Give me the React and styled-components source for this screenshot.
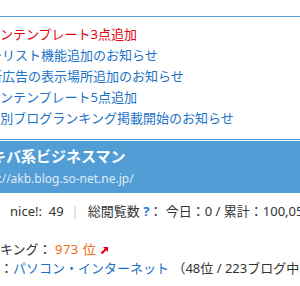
import styled, { createGlobalStyle } from 'styled-components'

const GlobalStyle = createGlobalStyle`
    html, body {
        margin: 0;
        padding: 0;
        background: #ffffff;
        overflow: hidden;
    }
    body {
        font-family: "Noto Sans", "Noto Sans CJK JP", sans-serif;
        color: #333333;
    }
`;

const Page = styled.div`
    width: 300px;
    height: 286px;
    overflow: hidden;
    padding-top: 16px;
    box-sizing: border-box;
`;

const Rule = styled.div`
    height: 1px;
    background: #5b9ed8;
    margin-top: ${p => p.gap || 0}px;
`;

const NewsList = styled.ul`
    list-style: none;
    margin: 0;
    padding: 7px 0 10px;
`;

const NewsItem = styled.li`
    font-size: 13px;
    line-height: 21px;
    white-space: nowrap;
    text-indent: ${p => p.shift}px;
    a {
        color: ${p => (p.hot ? '#e8000b' : '#1b73c8')};
        text-decoration: none;
    }
`;

const BlogHeader = styled.div`
    border-top: 1px solid #519bd6;
    padding-top: 1px;
`;

const HeaderBox = styled.div`
    background: #529dd6;
    padding: 5px 0 6px;
    white-space: nowrap;
`;

const BlogTitle = styled.h1`
    margin: 0;
    font-size: 15px;
    line-height: 20px;
    font-weight: bold;
    color: #ffffff;
    text-indent: -24px;
`;

const BlogUrl = styled.div`
    margin-top: 5px;
    font-size: 12px;
    line-height: 16px;
    color: #dfeaf6;
    text-indent: -25px;
`;

const InfoLine = styled.div`
    font-size: 13px;
    line-height: ${p => p.lh || 19}px;
    margin-top: ${p => p.gap || 0}px;
    padding-left: ${p => p.pad || 0}px;
    text-indent: ${p => p.shift || 0}px;
    white-space: nowrap;
    color: #333333;
`;

const Sep = styled.span`
    color: #cccccc;
    margin: 0 9px 0 8px;
`;

const Help = styled.span`
    color: #2a7bd0;
    font-weight: bold;
`;

const Rank = styled.span`
    color: #f06a12;
    letter-spacing: 0.5px;
`;

const Link = styled.a`
    color: #1b73c8;
    text-decoration: none;
`;

const Arrow = () => (
    <svg width="9" height="9" viewBox="0 0 9 9" style={{ marginLeft: 4, verticalAlign: -1 }}>
        <path d="M1.5 7.5 L6.5 2.5" stroke="#e3001b" strokeWidth="2.2" />
        <polygon points="3,1 8,1 8,6" fill="#e3001b" />
    </svg>
);

const news = [
    { text: 'デザインテンプレート3点追加', shift: -39, hot: true },
    { text: 'フォローリスト機能追加のお知らせ', shift: -50 },
    { text: '新広告の表示場所追加のお知らせ', shift: -11 },
    { text: 'デザインテンプレート5点追加', shift: -39 },
    { text: 'ジャンル別ブログランキング掲載開始のお知らせ', shift: -51 },
];

function App() {
  return (
    <Page>
        <GlobalStyle />
        <Rule />
        <NewsList>
            {news.map(n => (
                <NewsItem key={n.text} shift={n.shift} hot={n.hot}>
                    <a href="#">{n.text}</a>
                </NewsItem>
            ))}
        </NewsList>
        <BlogHeader>
            <HeaderBox>
                <BlogTitle>アキバ系ビジネスマン</BlogTitle>
                <BlogUrl>http://akb.blog.so-net.ne.jp/</BlogUrl>
            </HeaderBox>
        </BlogHeader>
        <InfoLine lh={20} gap={8} pad={10}>
            nice!:&nbsp; 49<Sep>|</Sep>総閲覧数 <Help>?</Help>： 今日：0 / 累計：100,058
        </InfoLine>
        <InfoLine gap={18.5} shift={-52}>
            総合ランキング： <Rank>973 位</Rank><Arrow />
        </InfoLine>
        <InfoLine shift={-65}>
            カテゴリー：<Link href="#">パソコン・インターネット</Link> （48位 / 223ブログ中）
        </InfoLine>
        <Rule gap={8} />
    </Page>
  );
}

export default App;
